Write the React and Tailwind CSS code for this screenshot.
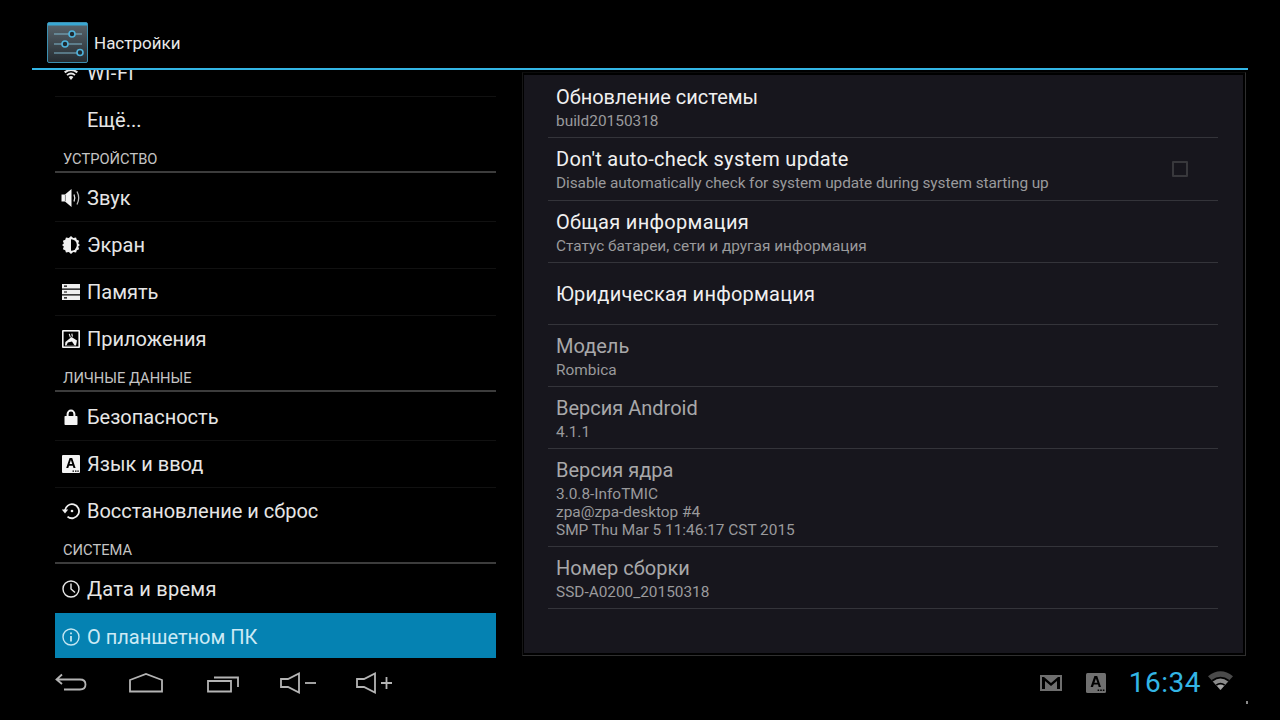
function Wifi({ className }) {
  return (
    <svg viewBox="0 0 25 19" className={className}>
      <path d="M12.5 19 L0 5.2 Q12.5 -4.5 25 5.2 L12.5 19 Z" fill="#4a4a4a" />
      <path d="M12.5 19 L3.6 9 Q12.5 2.4 21.4 9 Z" fill="#000" />
      <path d="M12.5 19 L4.8 10.4 Q12.5 4.6 20.2 10.4 Z" fill="#8a8a8a" />
      <path d="M12.5 19 L7.8 13.6 Q12.5 10 17.2 13.6 Z" fill="#000" />
      <path d="M12.5 19 L8.8 14.8 Q12.5 12 16.2 14.8 Z" fill="#a4a4a4" />
    </svg>
  );
}

const icons = {
  wifi: (
    <svg viewBox="0 0 18 14" className="w-[18px] h-[14px]" fill="#e8e8e8">
      <path d="M9 14 L6.6 11 Q9 9.2 11.4 11 Z" />
      <path d="M5.6 9.8 Q9 7.2 12.4 9.8 L13.6 8.4 Q9 4.8 4.4 8.4 Z" />
      <path d="M3.4 7.2 Q9 3 14.6 7.2 L16 5.6 Q9 0.4 2 5.6 Z" />
    </svg>
  ),
  sound: (
    <svg viewBox="0 0 20 20" className="w-5 h-5" fill="none">
      <path d="M0.5 6.5 H4 L10.5 1 V19 L4 13.5 H0.5 Z" fill="#f4f4f4" />
      <path d="M4.4 6.8 V13.2" stroke="#555" strokeWidth="0.7" />
      <path d="M13 6.5 Q14.6 10 13 13.5" stroke="#e0e0e0" strokeWidth="1.3" />
      <path d="M16 3.5 Q19.4 10 16 16.5" stroke="#b8b8b8" strokeWidth="1.3" />
    </svg>
  ),
  screen: (
    <svg viewBox="0 0 20 20" className="w-[18px] h-[18px]">
      <path fill="#f0f0f0" d="M10 0 L12.4 2.2 L15.6 1.6 L16.4 4.2 L19 5.4 L18 8.2 L20 10 L18 11.8 L19 14.6 L16.4 15.8 L15.6 18.4 L12.4 17.8 L10 20 L7.6 17.8 L4.4 18.4 L3.6 15.8 L1 14.6 L2 11.8 L0 10 L2 8.2 L1 5.4 L3.6 4.2 L4.4 1.6 L7.6 2.2 Z" />
      <path fill="#000" d="M10 3.5 A6.5 6.5 0 0 1 10 16.5 Z" />
    </svg>
  ),
  storage: (
    <svg viewBox="0 0 18 16" className="w-[18px] h-4" fill="#f0f0f0">
      <path fillRule="evenodd" d="M0 0 H18 V4.4 H0 Z M2 1.6 V2.8 H5 V1.6 Z" />
      <path fillRule="evenodd" d="M0 5.8 H18 V10.2 H0 Z M2 7.4 V8.6 H5 V7.4 Z" />
      <path fillRule="evenodd" d="M0 11.6 H18 V16 H0 Z M2 13.2 V14.4 H5 V13.2 Z" />
    </svg>
  ),
  apps: (
    <svg viewBox="0 0 18 18" className="w-[18px] h-[18px]">
      <rect width="18" height="18" rx="1" fill="#f4f4f4" />
      <rect x="1.6" y="1.6" width="14.8" height="14.8" fill="#000" />
      <path d="M3 15.5 L3.4 12 L9.5 7 L15 10.5 L14 15.5 Z" fill="#f4f4f4" />
      <path d="M4.5 15.5 L5.8 12.6 L10 11.4 L12.6 15.5 Z" fill="#000" />
      <path d="M7.2 3.8 L8.4 7.4 M9.8 3.6 L10.4 6.6" stroke="#f4f4f4" strokeWidth="1.1" />
    </svg>
  ),
  lock: (
    <svg viewBox="0 0 14 16" className="w-[14px] h-4" fill="none">
      <path d="M3.6 8 V5 A3.4 3.4 0 0 1 10.4 5 V8" stroke="#f4f4f4" strokeWidth="2" />
      <rect x="0.5" y="7" width="13" height="9" rx="0.8" fill="#f4f4f4" />
    </svg>
  ),
  lang: (
    <svg viewBox="0 0 18 18" className="w-[18px] h-[18px]">
      <rect width="18" height="18" rx="1" fill="#f4f4f4" />
      <path d="M7.6 3 H10.2 L13.6 13 H11.5 L10.8 10.8 H7 L6.3 13 H4.2 Z M7.6 9 H10.2 L8.9 5 Z" fill="#000" fillRule="evenodd" />
      <path d="M10.5 15.6 h1.5 v1.2 h-1.5 Z M13 15.6 h1.5 v1.2 h-1.5 Z M15.3 15.6 h1.5 v1.2 h-1.5 Z" fill="#000" />
    </svg>
  ),
  restore: (
    <svg viewBox="0 0 20 18" className="w-5 h-[18px]" fill="none" stroke="#f0f0f0" strokeWidth="1.8">
      <path d="M4 9 A7 7 0 1 1 6.5 14.6" />
      <path d="M0.8 7.6 H7.2 L4 11.4 Z" fill="#f0f0f0" stroke="none" />
      <circle cx="11" cy="9" r="1.3" fill="#f0f0f0" stroke="none" />
    </svg>
  ),
  clock: (
    <svg viewBox="0 0 18 18" className="w-[18px] h-[18px]" fill="none" stroke="#e8e8e8" strokeWidth="1.4">
      <circle cx="9" cy="9" r="8" />
      <path d="M9 3.5 V9 L13 12.5" />
    </svg>
  ),
  info: (
    <svg viewBox="0 0 18 18" className="w-[18px] h-[18px]" fill="none" stroke="#c4e6f2" strokeWidth="1.4">
      <circle cx="9" cy="9" r="8" />
      <path d="M9 8 V13.5" strokeWidth="1.8" />
      <path d="M9 4.4 V6.2" strokeWidth="1.8" />
    </svg>
  ),
};

function NavItem({ icon, label, selected, top, plain, tracking = "" }) {
  return (
    <div
      className={`flex items-center shrink-0 border-b ${
        selected ? "h-[45px] bg-[#0582b2] border-transparent text-[#cdeaf5] pt-[3px]" : "h-[47px] text-[#e6e6e6]"
      } ${plain ? "border-transparent" : selected ? "" : "border-[#111111]"} ${top ? "mt-[-20px]" : ""}`}
    >
      <div className="w-[32px] flex justify-center shrink-0">{icon}</div>
      <span className={`text-[20px] leading-none ${tracking}`}>{label}</span>
    </div>
  );
}

function Header({ children }) {
  return (
    <div className="h-[29px] shrink-0 flex items-center border-b-2 border-[#3c3c3c] mb-[2px] pt-[3px] pl-2 text-[14.7px] text-[#c4c4c4]">
      {children}
    </div>
  );
}

function Row({ title, sub, dim, h, checkbox, tt = "", st = "", pad = "pt-[1px]" }) {
  return (
    <div className={`relative flex flex-col justify-center border-b border-[#34343a] px-2 shrink-0 ${h} ${pad}`}>
      <div className={`text-[20px] leading-[26px] ${sub ? "mb-[2px]" : ""} ${tt} ${dim ? "text-[#a8a8aa]" : "text-[#f0f0f0]"}`}>{title}</div>
      {sub && (
        <div className={`text-[15.4px] leading-[18.3px] text-[#9a9a9c] ${st}`}>
          {sub.map((s) => (
            <div key={s}>{s}</div>
          ))}
        </div>
      )}
      {checkbox && (
        <div className="absolute right-[30px] top-[23px] w-[16px] h-[16px] border-2 border-[#38383c] rounded-[1px]" />
      )}
    </div>
  );
}

export default function App() {
  return (
    <div className="relative w-[1280px] h-[720px] bg-black overflow-hidden flex flex-col" style={{ fontFamily: "Roboto, 'Noto Sans', sans-serif" }}>
      <div className="h-[70px] shrink-0 px-[32px]">
        <div className="h-[70px] border-b-2 border-[#33b5e5] flex items-center pl-[15px] pt-[17px]">
          <svg viewBox="0 0 41 41" className="w-[41px] h-[41px] shrink-0">
            <defs>
              <linearGradient id="sg" x1="0" y1="0" x2="0" y2="1">
                <stop offset="0" stopColor="#5a666e" />
                <stop offset="1" stopColor="#252c31" />
              </linearGradient>
            </defs>
            <rect x="0.5" y="0.5" width="40" height="40" rx="1.5" fill="url(#sg)" stroke="#3d8fb0" />
            <rect x="1" y="1" width="39" height="2.5" fill="#39a8d4" />
            <path d="M7 12 H35 M7 22 H35 M7 31 H35" stroke="#7fb6cc" strokeWidth="1.2" />
            <circle cx="25" cy="12" r="3" fill="#1f2a30" stroke="#4fb3dc" strokeWidth="1.6" />
            <circle cx="18" cy="22" r="3" fill="#1f2a30" stroke="#4fb3dc" strokeWidth="1.6" />
            <circle cx="33" cy="30.5" r="3" fill="#1f2a30" stroke="#4fb3dc" strokeWidth="1.6" />
          </svg>
          <span className="ml-[6px] mt-[2px] text-[17px] text-[#e8e8e8]">Настройки</span>
        </div>
      </div>

      <div className="flex-1 min-h-0 flex pl-[55px]">
        <div className="w-[441px] shrink-0 h-[588px] flex flex-col overflow-hidden">
          <NavItem top icon={icons.wifi} label="Wi-Fi" tracking="tracking-[0.6px]" />
          <NavItem plain icon={<span />} label="Ещё..." />
          <Header>УСТРОЙСТВО</Header>
          <NavItem icon={icons.sound} label="Звук" />
          <NavItem icon={icons.screen} label="Экран" />
          <NavItem icon={icons.storage} label="Память" />
          <NavItem plain icon={icons.apps} label="Приложения" />
          <Header>ЛИЧНЫЕ ДАННЫЕ</Header>
          <NavItem icon={icons.lock} label="Безопасность" />
          <NavItem icon={icons.lang} label="Язык и ввод" />
          <NavItem plain icon={icons.restore} label="Восстановление и сброс" />
          <Header>СИСТЕМА</Header>
          <NavItem plain icon={icons.clock} label="Дата и время" tracking="tracking-[0.25px]" />
          <NavItem selected icon={icons.info} label="О планшетном ПК" />
        </div>

        <div className="ml-[26px] mt-[2px] w-[724px] h-[584px] border border-t-[#0c0c0c] border-l-[#161616] border-r-[#2f2f2f] border-b-[#2f2f2f] pl-[1px] pr-[2px] pt-[2px] pb-[2px]">
          <div className="h-full bg-[#17161d] pt-[1px] pl-[24px] pr-[25px] flex flex-col">
            <Row h="h-[62px]" title="Обновление системы" sub={["build20150318"]} />
            <Row h="h-[63px]" pad="" tt="tracking-[0.3px]" st="tracking-[-0.07px]" title="Don't auto-check system update" sub={["Disable automatically check for system update during system starting up"]} checkbox />
            <Row h="h-[62px]" tt="tracking-[0.3px]" title="Общая информация" sub={["Статус батареи, сети и другая информация"]} />
            <Row h="h-[62px]" pad="" tt="tracking-[0.23px]" title="Юридическая информация" />
            <Row h="h-[62px]" dim title="Модель" sub={["Rombica"]} />
            <Row h="h-[62px]" dim title="Версия Android" sub={["4.1.1"]} />
            <Row h="h-[98px]" dim title="Версия ядра" sub={["3.0.8-InfoTMIC", "zpa@zpa-desktop #4", "SMP Thu Mar 5 11:46:17 CST 2015"]} />
            <Row h="h-[62px]" dim title="Номер сборки" sub={["SSD-A0200_20150318"]} />
          </div>
        </div>
      </div>

      <div className="h-[62px] shrink-0 flex items-center pl-[55px] pb-[13px]">
        <svg viewBox="0 0 32 24" className="w-[32px] h-[24px]" fill="none" stroke="#b4b4b4" strokeWidth="1.8">
          <path d="M7 3.5 L1.5 8.5 L7 13 M1.5 8.5 H25 Q30.5 8.5 30.5 13.5 Q30.5 18.5 25 18.5 H9" />
        </svg>
        <svg viewBox="0 0 34 20" className="w-[34px] h-[20px] ml-[42px]" fill="none" stroke="#b4b4b4" strokeWidth="1.8">
          <path d="M1 7 L17 1 L33 7 V18.5 H1 Z" />
        </svg>
        <svg viewBox="0 0 34 20" className="w-[34px] h-[20px] ml-[44px]" fill="none" stroke="#b4b4b4" strokeWidth="1.8">
          <path d="M1 8 H24 V18.5 H1 Z" />
          <path d="M7 4.5 H31 V14" />
        </svg>
        <svg viewBox="0 0 38 22" className="w-[38px] h-[22px] ml-[39px]" fill="none" stroke="#b4b4b4" strokeWidth="1.8">
          <path d="M1 7 H8 L19 1.5 V20.5 L8 15 H1 Z" />
          <path d="M25 11 H36" />
        </svg>
        <svg viewBox="0 0 38 22" className="w-[38px] h-[22px] ml-[38px]" fill="none" stroke="#b4b4b4" strokeWidth="1.8">
          <path d="M1 7 H8 L19 1.5 V20.5 L8 15 H1 Z" />
          <path d="M25 11 H36 M30.5 5 V17" />
        </svg>
        <div className="ml-auto flex items-center">
          <svg viewBox="0 0 22 16" className="w-[22px] h-4">
            <path fillRule="evenodd" fill="#6e6e6e" d="M0 0 H22 V16 H0 Z M2 2 V14 H5 V6 L11 11 L17 6 V14 H20 V2 H18 L11 8 L4 2 Z" />
          </svg>
          <svg viewBox="0 0 20 20" className="w-5 h-5 ml-[24px]">
            <rect width="20" height="20" rx="1.5" fill="#707070" />
            <path d="M8.4 3 H11.2 L15 14 H12.7 L12 11.6 H7.8 L7 14 H4.6 Z M8.4 9.8 H11.4 L9.9 5.4 Z" fill="#000" fillRule="evenodd" />
            <path d="M11.6 16.5 h1.6 v1.4 h-1.6 Z M14.2 16.5 h1.6 v1.4 h-1.6 Z M16.8 16.5 h1.6 v1.4 h-1.6 Z" fill="#000" />
          </svg>
          <span className="ml-[23px] text-[28px] leading-none text-[#33b5e5] tracking-[0.5px]">16:34</span>
          <Wifi className="w-[25px] h-[19px] ml-[7px] mr-[47px] mb-[4px]" />
        </div>
      </div>
      <div className="absolute left-[1246px] top-[701px] w-[2px] h-[3px] bg-[#8a8a8a]" />
    </div>
  );
}
